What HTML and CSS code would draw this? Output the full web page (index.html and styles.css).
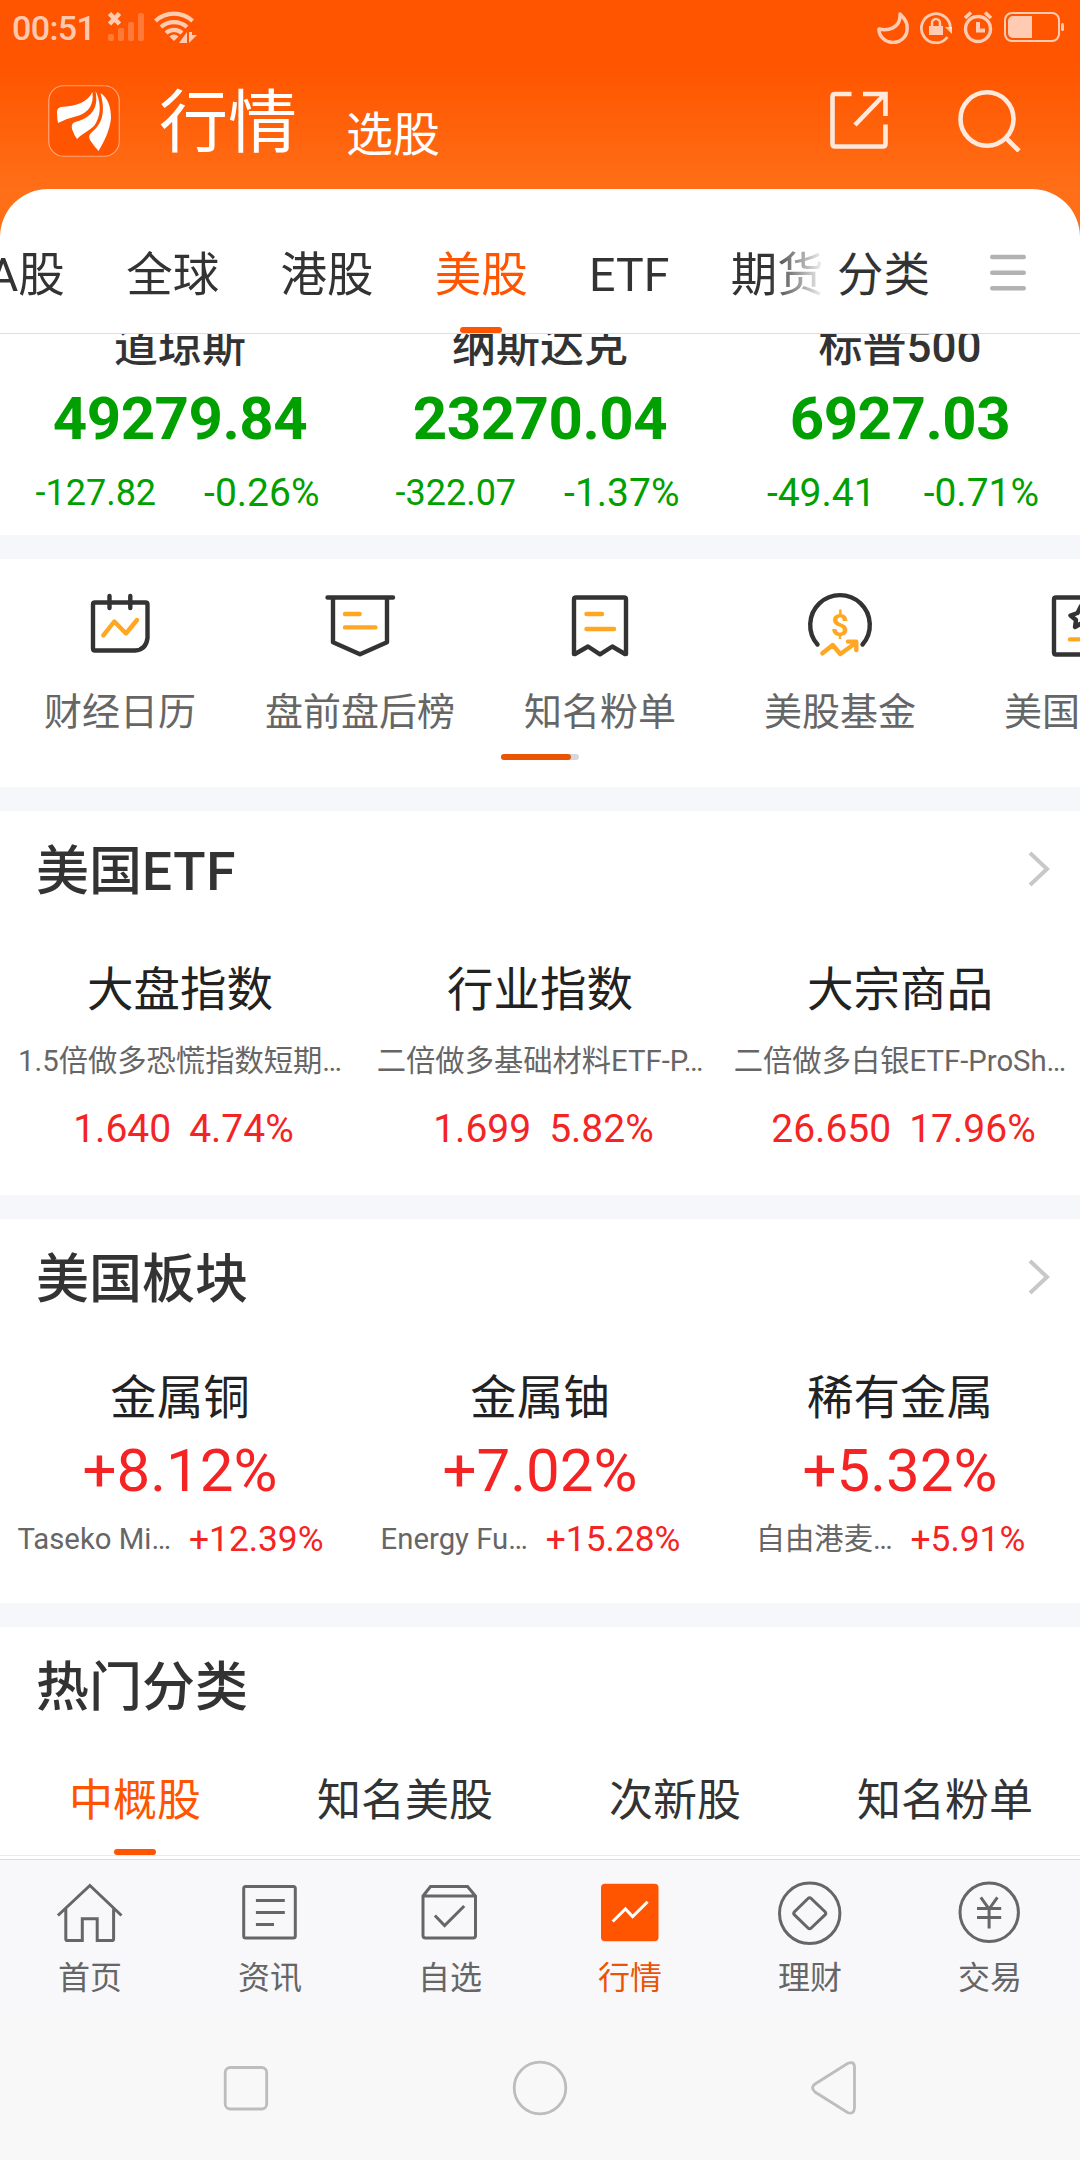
FILE: index.html
```html
<!DOCTYPE html>
<html lang="zh-CN">
<head>
    <meta charset="UTF-8">
    <meta name="viewport" content="width=device-width, initial-scale=1.0">
    <title>行情</title>
    <link rel="stylesheet" href="styles.css">
</head>
<body>
    <header class="header">
        <div class="status-bar">
            <span class="time">00:51</span>
            <svg class="signal" width="38" height="34" viewBox="0 0 38 34">
                <path d="M1.500 4.500l10 10.500M11.500 4.500l-10 10.500" stroke="#fff" stroke-opacity=".7" stroke-width="4.600"/>
                <g fill="#fff" fill-opacity=".22">
                    <rect x="0" y="25" width="6" height="7" rx="2"/>
                    <rect x="10" y="19" width="6" height="13" rx="2"/>
                    <rect x="20" y="13" width="6" height="19" rx="2"/>
                    <rect x="30" y="4" width="6" height="28" rx="2"/>
                </g>
            </svg>
            <svg class="wifi" width="44" height="34" viewBox="0 0 44 34">
                <g fill="none" stroke="#fff" stroke-opacity=".7" stroke-width="4.200">
                    <path d="M1.500 12a27 27 0 0 1 37 0"/>
                    <path d="M7 18a19.500 19.500 0 0 1 26 0"/>
                    <path d="M12 24a12 12 0 0 1 16 0"/>
                </g>
                <path d="M15.500 27.500q4.500-4 9 0l-4.500 4.500z" fill="#fff" fill-opacity=".7"/>
                <path d="M25 34l8-11v11zM35 23v11l8-8h-5v-3z" fill="#fff" fill-opacity=".7"/>
            </svg>
            <div class="status-right">
                <svg width="32" height="34" viewBox="0 0 32 34">
                    <path d="M23 4C28 9 31 13 30 20A14 13 0 0 1 2 19C10 21 24 19 23 4z" fill="none" stroke="#fff" stroke-opacity=".7" stroke-width="3.500" stroke-linejoin="round"/>
                </svg>
                <svg width="34" height="34" viewBox="0 0 34 34">
                    <path d="M28.500 27A14.500 14.500 0 1 1 31.400 19" fill="none" stroke="#fff" stroke-opacity=".7" stroke-width="2.800"/>
                    <path d="M26 17h7v7z" fill="#fff" fill-opacity=".7"/>
                    <rect x="10" y="16" width="14" height="9" fill="#fff" fill-opacity=".7"/>
                    <path d="M13 16v-3a4 4 0 0 1 8 0v3" fill="none" stroke="#fff" stroke-opacity=".7" stroke-width="2.500"/>
                </svg>
                <svg width="30" height="34" viewBox="0 0 30 34">
                    <g fill="none" stroke="#fff" stroke-opacity=".7">
                        <circle cx="15" cy="19" r="12.500" stroke-width="3.400"/>
                        <path d="M15 12v8.500h7" stroke-width="4"/>
                        <path d="M2 8l6-5.500M28 8l-6-5.500" stroke-width="3.600"/>
                    </g>
                </svg>
                <svg width="62" height="34" viewBox="0 0 62 34">
                    <rect x="2" y="3" width="54" height="28" rx="7" fill="none" stroke="#fff" stroke-opacity=".7" stroke-width="2"/>
                    <path d="M10 6h19v22H10a5 5 0 0 1-5-5V11a5 5 0 0 1 5-5z" fill="#fff" fill-opacity=".7"/>
                    <rect x="58" y="13" width="3" height="8" rx="1.500" fill="#fff" fill-opacity=".7"/>
                </svg>
            </div>
        </div>
        <div class="title-bar">
            <svg class="logo" width="72" height="72" viewBox="0 0 72 72">
                <rect x=".75" y=".75" width="70.500" height="70.500" rx="15" fill="#ff5500" stroke="#ffa57a" stroke-width="1.200"/>
                <g fill="#fff">
                    <path d="M44.500 7C39 18 28 21 13 22Q9 23 9 27Q9 33 10 38Q20 33 31 30.500C41 27 46 19 44.500 7z"/>
                    <path d="M47.500 6C51 24 43 33 26 37.500Q23 39 24 44Q26 50 29 54C36 47 44 45 48 38C54 27 52 15 47.500 6z"/>
                    <path d="M52.500 8C58 28 54 39 43 48Q40 51 42 55Q46 61 50.500 66C56 57 62 45 63 33C63 22 60 13 52.500 8z"/>
                </g>
            </svg>
            <h1 class="title">行情</h1>
            <span class="subtitle">选股</span>
            <div class="title-icons">
                <svg width="60" height="64" viewBox="0 0 60 64" fill="none" stroke="#ffe8dc" stroke-width="4.600">
                    <path d="M22.500 6H6Q3.500 6 3.500 8.500V56Q3.500 58.500 6 58.500H54Q56.500 58.500 56.500 56V36.500M34 6H56.500V28M54 8L26 37"/>
                </svg>
                <svg width="64" height="64" viewBox="0 0 64 64" fill="none" stroke="#ffe8dc" stroke-width="4.600">
                    <ellipse cx="30" cy="31" rx="26.500" ry="26.700"/>
                    <path d="M48.500 49.500L62 63"/>
                </svg>
            </div>
        </div>
    </header>

    <main class="content">
        <nav class="market-tabs">
            <div class="tabs-scroll">
                <span>A股</span>
                <span>全球</span>
                <span>港股</span>
                <span class="active">美股</span>
                <span>ETF</span>
                <span>期货</span>
            </div>
            <span class="category">分类</span>
            <svg class="menu-icon" width="36" height="38" viewBox="0 0 36 38" stroke="#b2b2b2" stroke-width="4.400" stroke-linecap="round">
                <path d="M2.200 3h31.600M2.200 18.700h31.600M2.200 34.200h31.600"/>
            </svg>
        </nav>

        <section class="indices">
            <div class="index-item">
                <div class="index-name">道琼斯</div>
                <div class="index-value">49279.84</div>
                <div class="index-change"><span class="small">-127.82</span><span>-0.26%</span></div>
            </div>
            <div class="index-item">
                <div class="index-name">纳斯达克</div>
                <div class="index-value">23270.04</div>
                <div class="index-change"><span class="small">-322.07</span><span>-1.37%</span></div>
            </div>
            <div class="index-item">
                <div class="index-name">标普500</div>
                <div class="index-value">6927.03</div>
                <div class="index-change wide"><span>-49.41</span><span>-0.71%</span></div>
            </div>
        </section>

        <section class="quick">
            <div class="quick-row">
                <div class="quick-item">
                    <svg class="quick-icon" viewBox="0 0 72 72">
                        <path class="dark" d="M11 12.500H61.500Q63.500 12.500 63.500 14.500V48Q62 60 51 60.500H11Q9 60.500 9 58.500V14.500Q9 12.500 11 12.500zM25.500 6V18M46.300 6V18"/>
                        <path class="amber" d="M19.300 45.300L30.300 31.500L42 43.500L53 30"/>
                    </svg>
                    <span>财经日历</span>
                </div>
                <div class="quick-item">
                    <svg class="quick-icon" viewBox="0 0 72 72">
                        <path class="dark" d="M3.500 7.500H69M9 8V52.300L36 64.300L63 52.300V8"/>
                        <path class="amber" d="M21 24H35.600M21 37.400H51.400"/>
                    </svg>
                    <span>盘前盘后榜</span>
                </div>
                <div class="quick-item">
                    <svg class="quick-icon" viewBox="0 0 72 72">
                        <path class="dark" d="M12 7.500H60Q62 7.500 62 9.500V64H61L48.300 56.500L36 64.300L24 56.500L11 64H10V9.500Q10 7.500 12 7.500z"/>
                        <path class="amber" d="M22.500 24H38M22.500 39H50"/>
                    </svg>
                    <span>知名粉单</span>
                </div>
                <div class="quick-item">
                    <svg class="quick-icon" viewBox="0 0 72 72">
                        <path class="dark" d="M13.500 54.500A29.800 29.800 0 1 1 58.500 54.500"/>
                        <text class="dollar" x="36" y="46">$</text>
                        <path class="amber" d="M18.400 63.300L28.700 55L36.300 64L51 53.500M44 51.600H52.300V60"/>
                    </svg>
                    <span>美股基金</span>
                </div>
                <div class="quick-item">
                    <svg class="quick-icon" viewBox="0 0 72 72">
                        <path class="dark" d="M12 7.500H60Q62 7.500 62 9.500V62.500Q62 64.500 60 64.500H12Q10 64.500 10 62.500V9.500Q10 7.500 12 7.500z"/>
                        <path class="dark" d="M37 16L40.500 23L48 24.500L42.500 29.500L44 37L37 33.500L31 37L32 30L26.500 25.500L33.500 23z"/>
                        <path class="amber" d="M26 49.400H50"/>
                    </svg>
                    <span class="quick-cut">美国</span>
                </div>
            </div>
            <div class="quick-progress"><div class="quick-progress-bar"></div></div>
        </section>

        <section class="panel">
            <div class="panel-head">
                <h2>美国<span class="latin">ETF</span></h2>
                <svg class="chevron" width="22" height="36" viewBox="0 0 22 36"><path d="M2 2l17 16L2 34"/></svg>
            </div>
            <div class="panel-row">
                <div class="card">
                    <div class="card-name">大盘指数</div>
                    <div class="card-desc">1.5倍做多恐慌指数短期…</div>
                    <div class="card-quote"><span>1.640</span><span>4.74%</span></div>
                </div>
                <div class="card">
                    <div class="card-name">行业指数</div>
                    <div class="card-desc">二倍做多基础材料ETF-P…</div>
                    <div class="card-quote"><span>1.699</span><span>5.82%</span></div>
                </div>
                <div class="card">
                    <div class="card-name">大宗商品</div>
                    <div class="card-desc">二倍做多白银ETF-ProSh…</div>
                    <div class="card-quote"><span>26.650</span><span>17.96%</span></div>
                </div>
            </div>
        </section>

        <section class="panel">
            <div class="panel-head">
                <h2>美国板块</h2>
                <svg class="chevron" width="22" height="36" viewBox="0 0 22 36"><path d="M2 2l17 16L2 34"/></svg>
            </div>
            <div class="panel-row">
                <div class="card">
                    <div class="card-name">金属铜</div>
                    <div class="card-rate">+8.12%</div>
                    <div class="card-lead"><span class="lead-name">Taseko Mi…</span><span>+12.39%</span></div>
                </div>
                <div class="card">
                    <div class="card-name">金属铀</div>
                    <div class="card-rate">+7.02%</div>
                    <div class="card-lead"><span class="lead-name">Energy Fu…</span><span>+15.28%</span></div>
                </div>
                <div class="card">
                    <div class="card-name">稀有金属</div>
                    <div class="card-rate">+5.32%</div>
                    <div class="card-lead"><span class="lead-name">自由港麦…</span><span>+5.91%</span></div>
                </div>
            </div>
        </section>

        <section class="panel hot">
            <div class="panel-head">
                <h2>热门分类</h2>
            </div>
            <div class="hot-tabs">
                <span class="active">中概股</span>
                <span>知名美股</span>
                <span>次新股</span>
                <span>知名粉单</span>
            </div>
        </section>
    </main>

    <footer class="tab-bar">
        <div class="tab-item">
            <svg class="tab-icon" viewBox="0 0 72 72"><path d="M3.900 39.500L35.900 9.500L67.500 39.500M11.800 33V63Q11.800 64.600 13.400 64.600H28.300V42.700H43.200V64.600H58Q59.600 64.600 59.600 63V33"/></svg>
            <span>首页</span>
        </div>
        <div class="tab-item">
            <svg class="tab-icon" viewBox="0 0 72 72"><rect x="9.700" y="10.500" width="51.600" height="51.500" rx="2"/><path d="M21.900 24.500H50.800M21.900 36.500H50.800M21.900 48.500H40"/></svg>
            <span>资讯</span>
        </div>
        <div class="tab-item">
            <svg class="tab-icon" viewBox="0 0 72 72"><path d="M9 20L16.500 10.500H53.500L61.500 20V59.500Q61.500 62 59 62H11.500Q9 62 9 59.500zM9 20H61.500M20.900 39.500L30.600 49.500L50.200 30"/></svg>
            <span>自选</span>
        </div>
        <div class="tab-item active">
            <svg class="tab-icon" viewBox="0 0 72 72"><rect x="7" y="7.700" width="57.500" height="57.500" rx="4" fill="#ff5500" stroke="none"/><path d="M18.700 45.500L31.400 32.900L38.600 40.500L53.600 25.700" stroke="#fff"/></svg>
            <span>行情</span>
        </div>
        <div class="tab-item">
            <svg class="tab-icon" viewBox="0 0 72 72"><circle cx="35.700" cy="37.300" r="30.200"/><path d="M34 22.500Q35.600 20.800 37.200 22.500L51 35.700Q52.500 37.300 51 38.900L37.200 52Q35.600 53.700 34 52L20.500 38.900Q19 37.300 20.500 35.700z"/></svg>
            <span>理财</span>
        </div>
        <div class="tab-item">
            <svg class="tab-icon" viewBox="0 0 72 72"><circle cx="35.200" cy="36.300" r="29.200"/><path d="M26.800 21.300L35.100 33L43.400 21.300M35.100 32V52.500M23 32.500H47.200M23 41.500H47.200"/></svg>
            <span>交易</span>
        </div>
    </footer>

    <div class="nav-bar">
        <svg width="56" height="56" viewBox="0 0 56 56"><rect x="7.200" y="7.500" width="41.500" height="41.500" rx="5"/></svg>
        <svg width="56" height="56" viewBox="0 0 56 56"><circle cx="28" cy="28" r="25.800"/></svg>
        <svg width="56" height="56" viewBox="0 0 56 56"><path d="M41.500 3.500Q48.200 0.500 48.500 7V48Q48 55 41.500 52.500L9 32Q4 27.700 9 24z"/></svg>
    </div>
</body>
</html>
```
FILE: styles.css
```css
* {
    box-sizing: border-box;
}
body {
    margin: 0;
    width: 1080px;
    height: 2160px;
    overflow: hidden;
    display: flex;
    flex-direction: column;
    background: #fff;
    color: #333;
    font-family: Roboto, "Noto Sans CJK SC", sans-serif;
}
svg {
    display: block;
    flex: none;
}
h1, h2 {
    margin: 0;
}

/* header */
.header {
    height: 237px;
    flex: none;
    background: linear-gradient(#ff5500 68px, #ff6f17 189px);
}
.status-bar {
    display: flex;
    align-items: flex-start;
    height: 56px;
    padding: 9px 15px 0 12px;
}
.time {
    width: 96px;
    font-size: 34px;
    font-weight: 500;
    line-height: 38px;
    letter-spacing: -0.6px;
    color: rgba(255, 255, 255, 0.7);
}
.signal {
    width: 38px;
}
.wifi {
    margin-left: 8px;
}
.status-right {
    display: flex;
    gap: 10px;
    margin-left: auto;
    margin-top: 1px;
}
.title-bar {
    display: flex;
    align-items: flex-start;
    padding: 29px 59px 0 48px;
    color: #fff;
}
.title {
    margin-left: 39px;
    font-size: 69px;
    font-weight: 400;
    line-height: 78px;
}
.subtitle {
    margin-left: 49px;
    font-size: 47px;
    line-height: 60px;
    padding-top: 20px;
}
.title-icons {
    display: flex;
    gap: 68px;
    margin-left: auto;
    margin-top: 3px;
}

/* market tabs */
.content {
    height: 1670px;
    flex: none;
    margin-top: -48px;
    overflow: hidden;
    border-radius: 48px 48px 0 0;
    background: #fff;
}
.market-tabs {
    display: flex;
    height: 145px;
    border-bottom: 1px solid #ddd;
    font-size: 46.5px;
    line-height: 60px;
}
.tabs-scroll {
    display: flex;
    gap: 61.3px;
    width: 826px;
    flex: none;
    overflow: hidden;
    padding-top: 56px;
    white-space: nowrap;
    -webkit-mask-image: linear-gradient(to right, #000 770px, transparent 826px);
    mask-image: linear-gradient(to right, #000 770px, transparent 826px);
}
.tabs-scroll span:first-child {
    margin-left: -12px;
}
.tabs-scroll .active,
.hot-tabs .active {
    display: flex;
    flex-direction: column;
    align-items: center;
    justify-content: space-between;
    color: #ff5500;
}
.tabs-scroll .active::after,
.hot-tabs .active::after {
    content: "";
    width: 42px;
    height: 6px;
    border-radius: 3px;
    background: #ff5500;
}
.category {
    padding-top: 56px;
    margin-left: 11px;
}
.menu-icon {
    margin: 65px 0 0 60px;
}

/* indices */
.indices {
    display: grid;
    grid-template-columns: repeat(3, 360px);
    height: 201px;
    overflow: hidden;
    text-align: center;
}
.index-item {
    margin-top: -17px;
}
.index-name {
    font-size: 44px;
    font-weight: 500;
    line-height: 60px;
}
.index-value {
    font-size: 60px;
    font-weight: 700;
    line-height: 84px;
    letter-spacing: -0.5px;
    color: #00a000;
}
.index-change {
    display: flex;
    justify-content: center;
    gap: 48px;
    padding-right: 5px;
    font-size: 39px;
    line-height: 65px;
    color: #00a000;
}
.index-change .small {
    font-size: 36px;
}
.index-change.wide {
    padding: 0 0 0 6px;
}

/* shortcuts */
.quick {
    height: 252px;
    border-top: 24px solid #f6f7fa;
    padding-top: 31px;
    overflow: hidden;
}
.quick-row {
    display: flex;
}
.quick-item {
    display: flex;
    flex-direction: column;
    align-items: center;
    width: 240px;
    flex: none;
    font-size: 38px;
    line-height: 50px;
    color: #666;
}
.quick-icon {
    width: 72px;
    height: 72px;
    margin-bottom: 25px;
    fill: none;
    stroke-width: 4.4;
    stroke-linecap: round;
    stroke-linejoin: round;
}
.quick-icon .dark {
    stroke: #333;
}
.quick-icon .amber {
    stroke: #ffa722;
}
.dollar {
    fill: #ffa722;
    font-size: 31px;
    font-weight: 700;
    text-anchor: middle;
}
.quick-cut {
    width: 152px;
}
.quick-progress {
    width: 78px;
    height: 6px;
    margin: 17px auto 0;
    border-radius: 3px;
    background: #d5d8df;
}
.quick-progress-bar {
    width: 70px;
    height: 6px;
    border-radius: 3px;
    background: #ea5504;
}

/* panels */
.panel {
    height: 408px;
    border-top: 24px solid #f6f7fa;
}
.panel-head {
    display: flex;
    align-items: center;
    justify-content: space-between;
    height: 120px;
    padding: 2px 30px 0 36px;
}
.panel-head h2 {
    font-size: 53px;
    font-weight: 500;
    line-height: 70px;
}
.panel-head .latin {
    letter-spacing: 0.8px;
}
.chevron {
    margin-bottom: 6px;
    fill: none;
    stroke: #c8c8c8;
    stroke-width: 4;
}
.panel-row {
    display: grid;
    grid-template-columns: repeat(3, 360px);
    padding-top: 29px;
    text-align: center;
    white-space: nowrap;
}
.card-name {
    font-size: 46.5px;
    line-height: 60px;
    color: #222;
}
.card-desc {
    font-size: 29.3px;
    line-height: 44px;
    margin-top: 19px;
    color: #666;
}
.card-quote {
    display: flex;
    justify-content: center;
    gap: 18px;
    padding-left: 7px;
    margin-top: 21px;
    font-size: 39px;
    line-height: 50px;
    color: #f52424;
}
.card-rate {
    font-size: 60px;
    line-height: 70px;
    margin-top: 8px;
    color: #f52424;
}
.card-lead {
    display: flex;
    justify-content: center;
    gap: 18px;
    padding-right: 19px;
    margin-top: 10px;
    font-size: 35.3px;
    line-height: 46px;
    color: #f52424;
}
.lead-name {
    font-size: 29.3px;
    color: #666;
}
.hot {
    height: 256px;
    border-bottom: 3px solid #fff;
}
.hot-tabs {
    display: grid;
    grid-template-columns: repeat(4, 270px);
    height: 109px;
    padding-top: 24px;
    border-bottom: 1px solid #eaeaea;
    font-size: 44px;
    line-height: 60px;
    text-align: center;
}

/* bottom bar */
.tab-bar {
    display: flex;
    height: 154px;
    flex: none;
    padding-top: 16px;
    border-top: 1px solid #ddd;
    background: #f8f8fa;
}
.tab-item {
    display: flex;
    flex-direction: column;
    align-items: center;
    width: 180px;
    font-size: 32px;
    line-height: 40px;
    color: #666;
}
.tab-item.active {
    color: #ea5504;
}
.tab-icon {
    width: 72px;
    height: 72px;
    margin-bottom: 10px;
    fill: none;
    stroke: #666;
    stroke-width: 3;
}
.nav-bar {
    display: flex;
    justify-content: center;
    gap: 238px;
    flex: 1;
    padding-top: 47px;
    background: #f8f8f8;
}
.nav-bar svg {
    fill: none;
    stroke: #bdbdbd;
    stroke-width: 2.8;
}
```
